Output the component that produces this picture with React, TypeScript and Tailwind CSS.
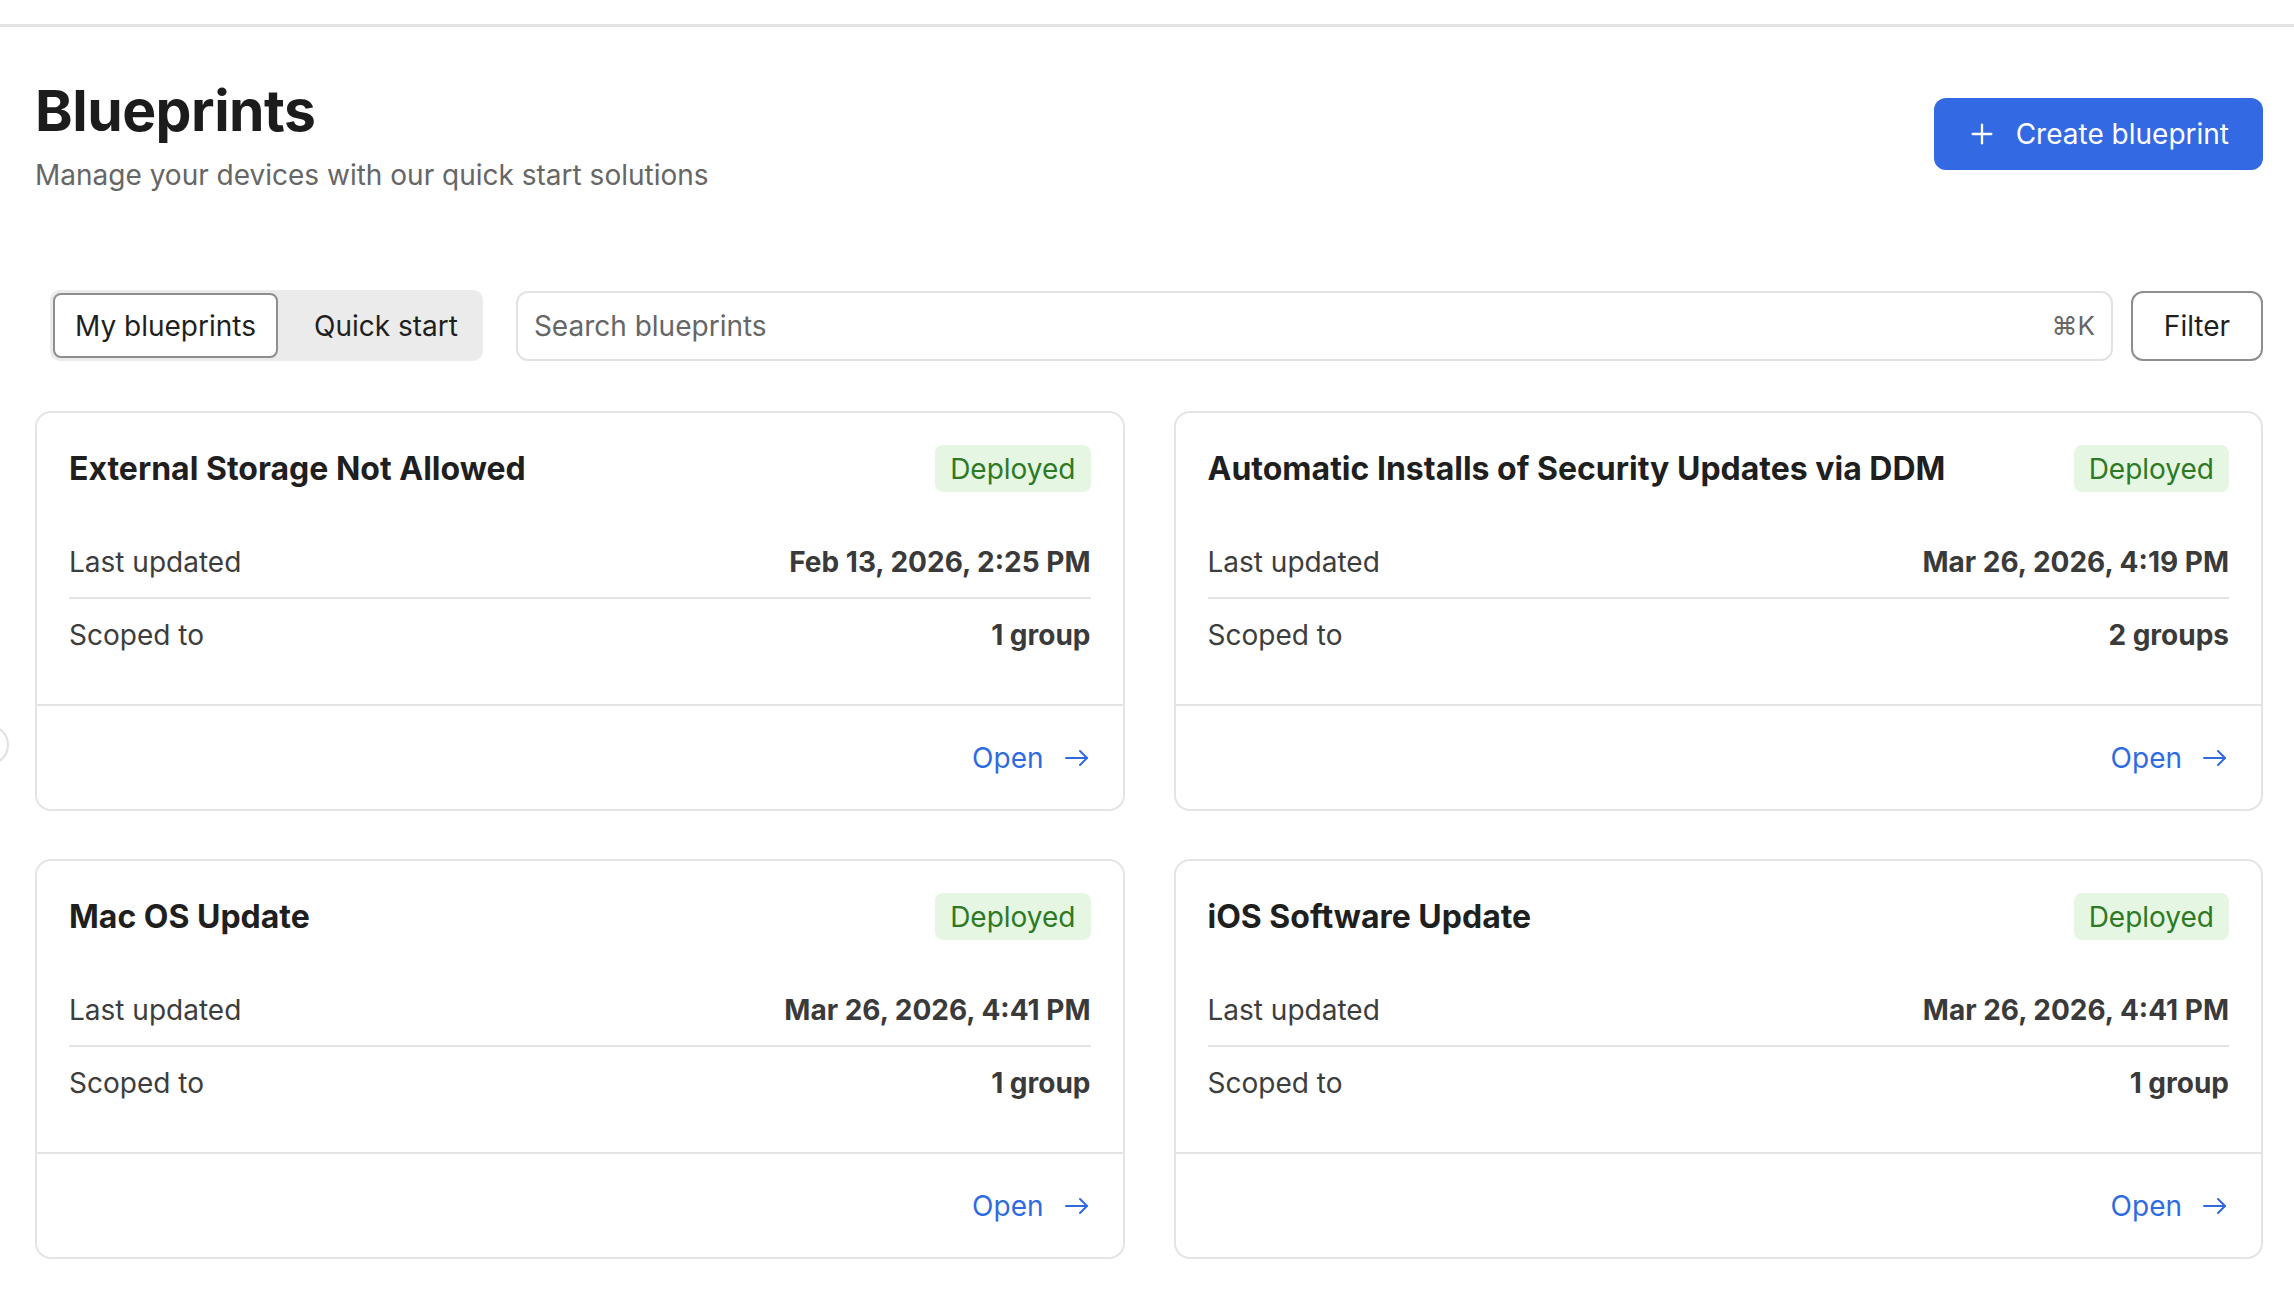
import React from 'react';
import { Plus } from 'lucide-react';

type Blueprint = {
  id: number;
  name: string;
  status: string;
  updated: string;
  scope: string;
};

const blueprints: Blueprint[] = [
  { id: 1, name: 'External Storage Not Allowed', status: 'Deployed', updated: 'Feb 13, 2026, 2:25 PM', scope: '1 group' },
  { id: 2, name: 'Automatic Installs of Security Updates via DDM', status: 'Deployed', updated: 'Mar 26, 2026, 4:19 PM', scope: '2 groups' },
  { id: 3, name: 'Mac OS Update', status: 'Deployed', updated: 'Mar 26, 2026, 4:41 PM', scope: '1 group' },
  { id: 4, name: 'iOS Software Update', status: 'Deployed', updated: 'Mar 26, 2026, 4:41 PM', scope: '1 group' },
];

const OpenArrow = () => (
  <svg width="24" height="18" viewBox="0 0 24 18" fill="none" stroke="currentColor" strokeWidth="2" strokeLinecap="round" strokeLinejoin="round">
    <path d="M1 9h21" />
    <path d="M15 2l7 7-7 7" />
  </svg>
);

const BlueprintCard: React.FC<{ bp: Blueprint }> = ({ bp }) => (
  <div className="bg-white border-2 border-[#e4e4e4] rounded-[16px]">
    <div className="px-[32px] pt-[32px] pb-[33px]">
      <div className="flex items-center justify-between h-[47px]">
        <h3 className="text-[32px] font-bold text-[#1f1f1f]">{bp.name}</h3>
        <span className="h-[47px] px-[15px] flex items-center rounded-[8px] bg-[#e5f6e3] text-[#2e7a24] text-[28px]">
          {bp.status}
        </span>
      </div>
      <div className="mt-[33px]">
        <div className="h-[74px] flex items-center justify-between border-b-2 border-[#e4e4e4] pt-[2px]">
          <span className="text-[28px] text-[#3d3d3d]">Last updated</span>
          <span className="text-[28px] font-bold text-[#3a3a3a]">{bp.updated}</span>
        </div>
        <div className="h-[72px] flex items-center justify-between">
          <span className="text-[28px] text-[#3d3d3d]">Scoped to</span>
          <span className="text-[28px] font-bold text-[#3a3a3a]">{bp.scope}</span>
        </div>
      </div>
    </div>
    <div className="border-t-2 border-[#e4e4e4] h-[105px] flex items-center justify-end pr-[34px]">
      <button className="flex items-center gap-[21px] text-[#2f6be0] text-[28px]">
        Open
        <OpenArrow />
      </button>
    </div>
  </div>
);

const App: React.FC = () => {
  return (
    <div className="relative min-h-screen bg-white font-[Inter,sans-serif] overflow-hidden">
      <div className="h-[24px]" />
      <div className="h-[3px] bg-[#e3e3e3]" />

      {/* collapsed sidebar toggle peeking in */}
      <div className="absolute left-[-31px] top-[725px] w-[40px] h-[40px] rounded-full border-2 border-[#e0e0e0] bg-white" />

      <div className="pl-[35px] pr-[31px]">
        {/* Header */}
        <div className="flex items-start justify-between mt-[55px]">
          <div>
            <h1 className="text-[57px] leading-none font-bold text-[#1c1c1c] tracking-[-0.5px]">Blueprints</h1>
            <p className="mt-[15px] text-[28px] text-[#666666]">Manage your devices with our quick start solutions</p>
          </div>
          <button className="mt-[16px] h-[72px] pl-[32px] pr-[34px] flex items-center gap-[18px] rounded-[12px] bg-[#3369e3] text-white text-[28px]">
            <Plus size={32} strokeWidth={1.75} />
            Create blueprint
          </button>
        </div>

        {/* Toolbar */}
        <div className="flex items-center mt-[94px] h-[71px]">
          <div className="ml-[15px] h-[71px] flex items-center p-[3px] rounded-[10px] bg-[#ebebeb]">
            <button className="h-full px-[20px] flex items-center rounded-[8px] bg-white border-2 border-[#8e8e8e] text-[28px] text-[#1f1f1f]">
              My blueprints
            </button>
            <button className="h-full pl-[36px] pr-[22px] flex items-center text-[28px] text-[#1f1f1f]">
              Quick start
            </button>
          </div>
          <div className="flex-1 ml-[33px] h-[70px] flex items-center justify-between border-2 border-[#e2e2e2] rounded-[12px] px-[16px]">
            <span className="text-[28px] text-[#666666]">Search blueprints</span>
            <span className="text-[26px] text-[#666666]">⌘K</span>
          </div>
          <button className="ml-[18px] w-[132px] h-[70px] flex items-center justify-center border-2 border-[#8e8e8e] rounded-[12px] text-[28px] text-[#1f1f1f]">
            Filter
          </button>
        </div>

        {/* Cards */}
        <div className="grid grid-cols-2 gap-x-[49px] gap-y-[48px] mt-[50px] pb-[40px]">
          {blueprints.map(bp => (
            <BlueprintCard key={bp.id} bp={bp} />
          ))}
        </div>
      </div>
    </div>
  );
};

export default App;
